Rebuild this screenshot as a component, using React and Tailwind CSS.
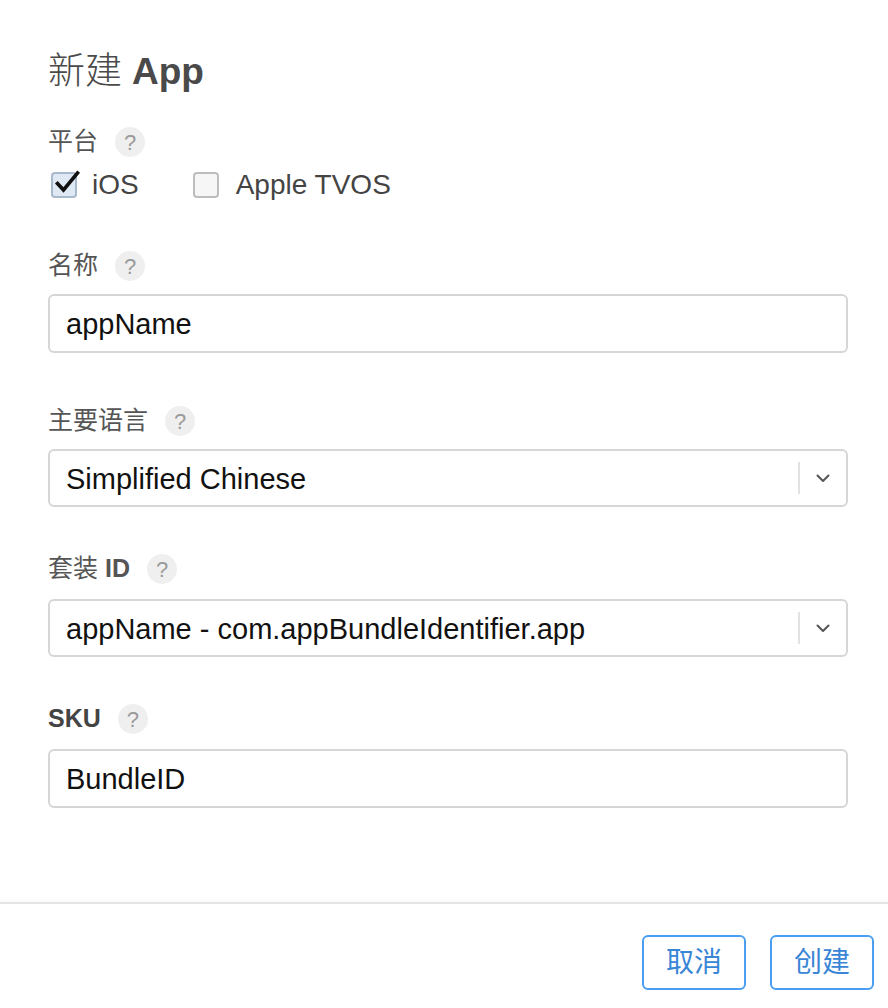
import React from "react";

const sans = { fontFamily: '"Liberation Sans", "Noto Sans CJK SC", Arial, sans-serif' };

function Help() {
  return (
    <span className="ml-[17px] inline-flex h-[30px] w-[30px] items-center justify-center rounded-full bg-[#efefef] text-[22px] font-light text-[#9a9a9a]">
      ?
    </span>
  );
}

function Label({ children, className = "" }) {
  return (
    <div className={"flex h-[34px] items-center text-[25px] text-[#555555] " + className}>
      {children}
      <Help />
    </div>
  );
}

function Input({ value, className = "" }) {
  return (
    <div className={"flex h-[59px] items-center rounded-[6px] border-2 border-[#d6d6d6] bg-white pl-[16px] pt-[3px] text-[29px] text-[#111111] " + className}>
      {value}
    </div>
  );
}

function Select({ value, className = "" }) {
  return (
    <div className={"flex h-[58px] items-center rounded-[6px] border-2 border-[#d6d6d6] bg-white pl-[16px] text-[29px] text-[#111111] " + className}>
      <span className="flex-1 pt-[4px]">{value}</span>
      <span className="h-[32px] w-[2px] bg-[#e2e2e2]" />
      <span className="flex w-[46px] items-center justify-center">
        <svg width="14" height="9" viewBox="0 0 14 9" fill="none">
          <path d="M1.5 1.5 L7 7 L12.5 1.5" stroke="#555" strokeWidth="2" strokeLinecap="round" strokeLinejoin="round" />
        </svg>
      </span>
    </div>
  );
}

export default function App() {
  return (
    <div className="h-[1008px] w-[888px] bg-white" style={sans}>
      <div className="pl-[48px] pr-[40px] pt-[48px]">
        <div className="flex h-[48px] items-center text-[37px] text-[#4a4a4a]">
          <span className="font-light">新建</span>
          <span className="ml-[10px] font-bold">App</span>
        </div>

        <Label className="mt-[29px]">平台</Label>
        <div className="mt-[9px] flex h-[34px] items-center text-[28px] text-[#444444]">
          <span className="relative ml-[3px] inline-block h-[26px] w-[26px] rounded-[4px] border-2 border-[#a9b9cc] bg-[#dfe9f3]">
            <svg className="absolute left-[1px] top-[-6px]" width="28" height="28" viewBox="0 0 28 28" fill="none">
              <path d="M3.5 15.5 L9.5 22 L23.5 5" stroke="#111" strokeWidth="3.6" strokeLinecap="square" strokeLinejoin="miter" />
            </svg>
          </span>
          <span className="ml-[15px]">iOS</span>
          <span className="ml-[54px] inline-block h-[26px] w-[26px] rounded-[4px] border-2 border-[#bdbdbd] bg-[#f6f6f6]" />
          <span className="ml-[17px]">Apple TVOS</span>
        </div>

        <Label className="mt-[47px]">名称</Label>
        <Input className="mt-[11px]" value="appName" />

        <Label className="mt-[51px]">主要语言</Label>
        <Select className="mt-[11px]" value="Simplified Chinese" />

        <Label className="mt-[45px]">
          <span>套装</span>
          <span className="ml-[7px] font-bold">ID</span>
        </Label>
        <Select className="mt-[13px]" value="appName - com.appBundleIdentifier.app" />

        <Label className="mt-[45px]">
          <span className="font-bold text-[#444]">SKU</span>
        </Label>
        <Input className="mt-[13px]" value="BundleID" />
      </div>

      <div className="mt-[94px] h-[2px] w-full bg-[#e4e4e4] shadow-[0_-2px_3px_rgba(0,0,0,0.03)]" />

      <div className="mt-[31px] flex justify-end gap-[24px] pr-[14px]">
        <button className="flex h-[55px] w-[104px] items-center justify-center rounded-[6px] border-2 border-[#4b9ef2] bg-white text-[28px] text-[#3a86d6]">
          取消
        </button>
        <button className="flex h-[55px] w-[104px] items-center justify-center rounded-[6px] border-2 border-[#4b9ef2] bg-white text-[28px] text-[#3a86d6]">
          创建
        </button>
      </div>
    </div>
  );
}
